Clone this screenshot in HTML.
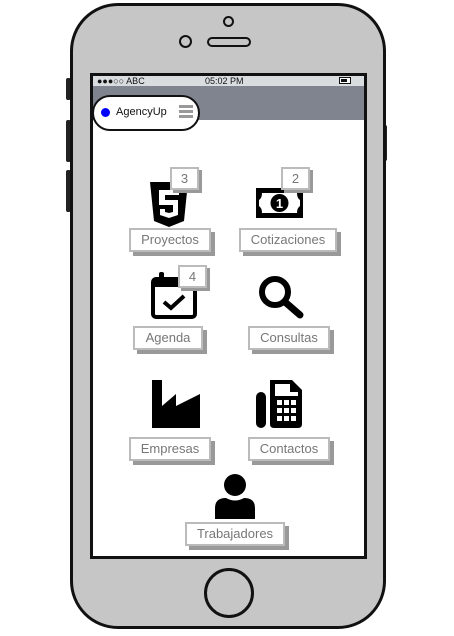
<!DOCTYPE html><html><head><style>
body{margin:0;width:454px;height:636px;background:#fff;position:relative;overflow:hidden;font-family:"Liberation Sans",sans-serif}
.a{position:absolute}
.lbl{position:absolute;height:20px;border:2px solid #bbb;background:#fff;box-shadow:4px 4px 0 #999;color:#777;font-size:13px;text-align:center;line-height:20px;box-sizing:content-box}
.bdg{position:absolute;width:25px;height:19px;border:2px solid #bbb;background:#fff;box-shadow:3px 3px 0 #999;color:#777;font-size:13px;text-align:center;line-height:19px}
</style></head><body>
<div class="a" style="left:66px;top:78px;width:5px;height:22px;background:#222;border-radius:2px"></div>
<div class="a" style="left:66px;top:120px;width:5px;height:42px;background:#222;border-radius:2px"></div>
<div class="a" style="left:66px;top:170px;width:5px;height:42px;background:#222;border-radius:2px"></div>
<div class="a" style="left:382px;top:125px;width:5px;height:36px;background:#222;border-radius:2px"></div>
<div class="a" style="left:70px;top:3px;width:310px;height:620px;background:#c6c6c6;border:3px solid #111;border-radius:48px"></div>
<div class="a" style="left:179px;top:35px;width:9px;height:9px;border:2px solid #111;border-radius:50%;background:#c6c6c6"></div>
<div class="a" style="left:223px;top:16px;width:7px;height:7px;border:2px solid #111;border-radius:50%"></div>
<div class="a" style="left:207px;top:37px;width:40px;height:6px;border:2px solid #111;border-radius:5px"></div>
<div class="a" style="left:204px;top:568px;width:44px;height:44px;border:3px solid #111;border-radius:50%"></div>
<div class="a" style="left:90px;top:73px;width:271px;height:480px;border:3px solid #111;background:#fff"></div>
<div class="a" style="left:93px;top:76px;width:271px;height:10px;background:#d9dde0;font-size:9px;line-height:10px;color:#111">
<span class="a" style="left:4px">●●●○○ ABC</span><span class="a" style="left:112px">05:02 PM</span><span class="a" style="left:246px;top:1px;width:10px;height:5px;border:1px solid #111;background:#fff"><span class="a" style="left:1px;top:1px;width:6px;height:3px;background:#111"></span></span></div>
<div class="a" style="left:93px;top:86px;width:271px;height:34px;background:#80848e"></div>
<div class="a" style="left:92px;top:95px;width:104px;height:32px;border:2px solid #111;border-radius:18px;background:#fff"></div>
<div class="a" style="left:101px;top:108px;width:9px;height:9px;border-radius:50%;background:#00f"></div>
<div class="a" style="left:116px;top:105px;font-size:11px;line-height:14px;color:#111">AgencyUp</div>
<div class="a" style="left:179px;top:105px;width:14px;height:3px;background:#999;box-shadow:0 5px 0 #999,0 10px 0 #999"></div>

<svg class="a" style="left:150px;top:182px" width="38" height="45" viewBox="0 0 38 45"><path d="M0 0H38L34 39L19 45L4 39Z" fill="#000"/><path d="M9 8H29V13H15V18H28V33L19 36L10 33V27H15V30L19 31L23 30V23H9Z" fill="#fff"/></svg>
<svg class="a" style="left:256px;top:188px" width="47" height="30" viewBox="0 0 47 30"><rect width="47" height="30" fill="#000"/><path d="M6 5H41Q41 10 44 12V18Q41 20 41 25H6Q6 20 3 18V12Q6 10 6 5Z" fill="#fff"/><circle cx="23.5" cy="15" r="9" fill="#000"/><text x="23.5" y="20" font-size="13" font-weight="bold" fill="#fff" text-anchor="middle">1</text></svg>
<svg class="a" style="left:151px;top:271px" width="46" height="48" viewBox="0 0 46 48"><rect x="2" y="8" width="42" height="38" rx="3" fill="none" stroke="#000" stroke-width="4"/><rect x="2" y="8" width="42" height="8" fill="#000"/><rect x="8" y="1" width="5" height="12" rx="2" fill="#000"/><path d="M13 31L20 37L33 25" fill="none" stroke="#000" stroke-width="4"/></svg>
<svg class="a" style="left:258px;top:275px" width="46" height="44" viewBox="0 0 46 44"><circle cx="17" cy="17" r="13" fill="none" stroke="#000" stroke-width="6"/><path d="M27 27L42 40" stroke="#000" stroke-width="7" stroke-linecap="round"/></svg>
<svg class="a" style="left:152px;top:380px" width="49" height="48" viewBox="0 0 49 48"><path d="M0 0H10V26L24 14V26L48 14V48H0Z" fill="#000"/></svg>
<svg class="a" style="left:256px;top:380px" width="48" height="48" viewBox="0 0 48 48"><rect x="0" y="12" width="10" height="36" rx="5" fill="#000"/><path d="M14 0H36L46 10V44Q46 48 42 48H18Q14 48 14 44Z" fill="#000"/><path d="M19 4H34V12H42V16H19Z" fill="#fff"/><g fill="#fff"><rect x="21" y="20" width="5" height="5"/><rect x="28" y="20" width="5" height="5"/><rect x="35" y="20" width="5" height="5"/><rect x="21" y="28" width="5" height="5"/><rect x="28" y="28" width="5" height="5"/><rect x="35" y="28" width="5" height="5"/><rect x="21" y="36" width="5" height="5"/><rect x="28" y="36" width="5" height="5"/><rect x="35" y="36" width="5" height="5"/></g></svg>
<svg class="a" style="left:215px;top:474px" width="40" height="45" viewBox="0 0 40 45"><circle cx="20" cy="11" r="11" fill="#000"/><path d="M0 45V34Q0 24 11 24Q20 29 29 24Q40 24 40 34V45Z" fill="#000"/></svg>

<div class="bdg" style="left:170px;top:167px">3</div>
<div class="bdg" style="left:281px;top:167px">2</div>
<div class="bdg" style="left:178px;top:265px">4</div>
<div class="lbl" style="left:129px;top:228px;width:78px">Proyectos</div>
<div class="lbl" style="left:239px;top:228px;width:94px">Cotizaciones</div>
<div class="lbl" style="left:133px;top:326px;width:66px">Agenda</div>
<div class="lbl" style="left:248px;top:326px;width:78px">Consultas</div>
<div class="lbl" style="left:129px;top:437px;width:78px">Empresas</div>
<div class="lbl" style="left:248px;top:437px;width:78px">Contactos</div>
<div class="lbl" style="left:185px;top:522px;width:96px">Trabajadores</div>
</body></html>
